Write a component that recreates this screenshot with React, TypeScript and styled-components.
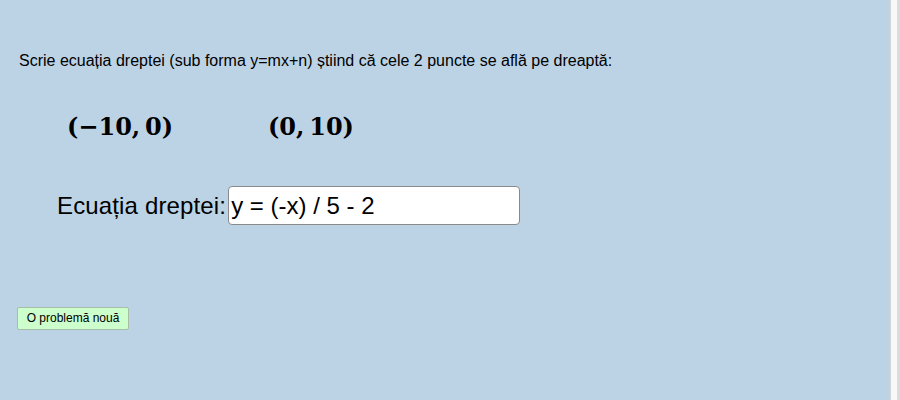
import React from "react";
import styled, { createGlobalStyle } from "styled-components";

const Global = createGlobalStyle`
  html, body { margin: 0; padding: 0; background: #ffffff; }
  body { font-family: "Liberation Sans", Arial, sans-serif; }
`;

const Page = styled.div`
  display: flex;
  width: 900px;
  height: 400px;
  overflow: hidden;
`;

const Canvas = styled.div`
  width: 890px;
  height: 400px;
  background: #bcd3e6;
  display: flex;
  flex-direction: column;
  box-sizing: border-box;
  padding: 52px 0 0 19px;
`;

const Strip = styled.div`
  width: 10px;
  height: 400px;
  box-sizing: border-box;
  background: #f8f8f8;
  border-left: 1px solid #d4d4d4;
  border-right: 3px solid #dcdcdc;
`;

const Instruction = styled.div`
  font-size: 16px;
  line-height: 18px;
  color: #000;
`;

const Points = styled.div`
  display: flex;
  margin-top: 42px;
  padding-left: 48px;
`;

const Point = styled.div<{ $w: number }>`
  width: ${(p) => p.$w}px;
  font-family: "DejaVu Serif", "Liberation Serif", serif;
  font-weight: bold;
  font-size: 24px;
  line-height: 30px;
  color: #000;
  white-space: pre;
`;

const Row = styled.div`
  display: flex;
  align-items: center;
  margin-top: 44px;
  padding-left: 38px;
`;

const Label = styled.span`
  font-size: 24px;
  letter-spacing: 0.15px;
  color: #000;
  margin-right: 2px;
`;

const Field = styled.div`
  width: 292px;
  height: 39px;
  box-sizing: border-box;
  background: #fff;
  border: 1px solid #8a8a8a;
  border-radius: 4px;
  font-size: 24px;
  line-height: 37px;
  padding-left: 2px;
  color: #000;
`;

const Button = styled.div`
  margin-top: 82px;
  margin-left: -2px;
  width: 112px;
  height: 23px;
  box-sizing: border-box;
  background: #ccffcc;
  border: 1px solid #a6bfa6;
  border-radius: 2px;
  font-size: 12px;
  line-height: 21px;
  text-align: center;
  color: #000;
`;

export default function App() {
  return (
    <>
      <Global />
      <Page>
        <Canvas>
          <Instruction>
            Scrie ecuația dreptei (sub forma y=mx+n) știind că cele 2 puncte se află pe dreaptă:
          </Instruction>
          <Points>
            <Point $w={201}>(−10,{"\u2009"}0)</Point>
            <Point $w={120}>(0,{"\u2009"}10)</Point>
          </Points>
          <Row>
            <Label>Ecuația dreptei:</Label>
            <Field>y = (-x) / 5 - 2</Field>
          </Row>
          <Button>O problemă nouă</Button>
        </Canvas>
        <Strip />
      </Page>
    </>
  );
}
